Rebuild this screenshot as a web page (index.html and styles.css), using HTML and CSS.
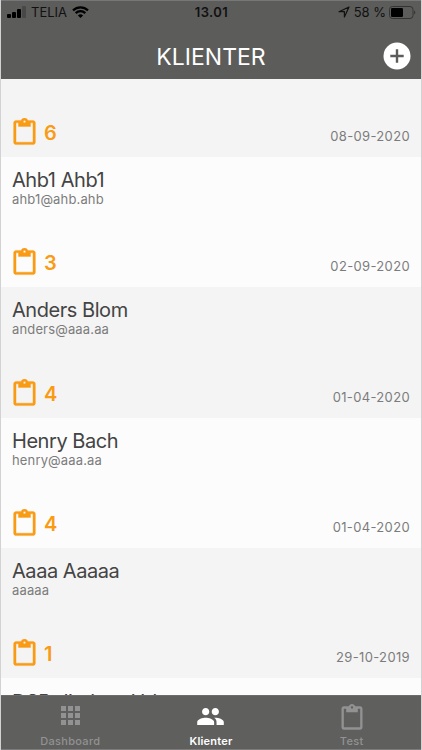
FILE: index.html
```html
<!DOCTYPE html>
<html lang="da">
<head>
    <meta charset="UTF-8">
    <meta name="viewport" content="width=device-width, initial-scale=1.0">
    <title>Klienter</title>
    <link rel="stylesheet" href="styles.css">
</head>
<body>
    <svg class="symbols">
        <symbol id="clipboard" viewBox="0 0 24 24">
            <path d="M19 2h-4.18C14.4.84 13.3 0 12 0c-1.3 0-2.4.84-2.82 2H5c-1.1 0-2 .9-2 2v16c0 1.1.9 2 2 2h14c1.1 0 2-.9 2-2V4c0-1.1-.9-2-2-2zm-7 0c.55 0 1 .45 1 1s-.45 1-1 1-1-.45-1-1 .45-1 1-1zm7 18H5V4h2v3h10V4h2v16z"/>
        </symbol>
    </svg>

    <div class="app">
        <header>
            <div class="status-bar">
                <div class="status-left">
                    <svg class="signal" viewBox="0 0 19 12">
                        <rect x="0" y="8" width="4" height="4" rx="1"/>
                        <rect x="5" y="6" width="4" height="6" rx="1"/>
                        <rect x="10" y="3" width="4" height="9" rx="1"/>
                        <rect class="dim" x="15" y="0" width="4" height="12" rx="1"/>
                    </svg>
                    <span class="carrier">TELIA</span>
                    <svg class="wifi" viewBox="0 0 17 12">
                        <path d="M1 4.4a10.8 10.8 0 0 1 15 0M3.7 7.1a7 7 0 0 1 9.6 0"/>
                        <path class="dot" d="M8.5 12L5.9 9.4a3.8 3.8 0 0 1 5.2 0z"/>
                    </svg>
                </div>
                <span class="clock">13.01</span>
                <div class="status-right">
                    <svg class="location" viewBox="0 0 12 12">
                        <path d="M1 5.7L11 1 6.4 11V5.7z"/>
                    </svg>
                    <span class="percent">58 %</span>
                    <svg class="battery" viewBox="0 0 27 13">
                        <rect class="shell" x=".5" y=".5" width="23.5" height="12" rx="3"/>
                        <rect x="2" y="2" width="12" height="9" rx="1.2"/>
                        <path class="tip" d="M25.2 4.5c1.6.6 1.6 3.4 0 4z"/>
                    </svg>
                </div>
            </div>
            <div class="title-bar">
                <h1>KLIENTER</h1>
                <button class="add-button" aria-label="Tilføj">
                    <svg viewBox="0 0 28 28">
                        <circle cx="14" cy="14" r="13.5"/>
                        <path d="M7.3 14h13.4M14 7.3v13.4"/>
                    </svg>
                </button>
            </div>
        </header>

        <main class="clients">
            <div class="client first">
                <div class="client-footer">
                    <svg class="clip"><use href="#clipboard"/></svg>
                    <span class="count">6</span>
                    <span class="date">08-09-2020</span>
                </div>
            </div>
            <div class="client">
                <h2>Ahb1 Ahb1</h2>
                <p>ahb1@ahb.ahb</p>
                <div class="client-footer">
                    <svg class="clip"><use href="#clipboard"/></svg>
                    <span class="count">3</span>
                    <span class="date">02-09-2020</span>
                </div>
            </div>
            <div class="client">
                <h2>Anders Blom</h2>
                <p>anders@aaa.aa</p>
                <div class="client-footer">
                    <svg class="clip"><use href="#clipboard"/></svg>
                    <span class="count">4</span>
                    <span class="date">01-04-2020</span>
                </div>
            </div>
            <div class="client">
                <h2>Henry Bach</h2>
                <p>henry@aaa.aa</p>
                <div class="client-footer">
                    <svg class="clip"><use href="#clipboard"/></svg>
                    <span class="count">4</span>
                    <span class="date">01-04-2020</span>
                </div>
            </div>
            <div class="client">
                <h2>Aaaa Aaaaa</h2>
                <p>aaaaa</p>
                <div class="client-footer">
                    <svg class="clip"><use href="#clipboard"/></svg>
                    <span class="count">1</span>
                    <span class="date">29-10-2019</span>
                </div>
            </div>
            <div class="client">
                <h2>DSB direktør Ud</h2>
            </div>
        </main>

        <nav class="tabs">
            <a class="tab">
                <svg class="grid-icon" viewBox="0 0 19 19">
                    <path d="M0 0h5v5H0zM7 0h5v5H7zM14 0h5v5h-5zM0 7h5v5H0zM7 7h5v5H7zM14 7h5v5h-5zM0 14h5v5H0zM7 14h5v5H7zM14 14h5v5h-5z"/>
                </svg>
                <span>Dashboard</span>
            </a>
            <a class="tab active">
                <svg class="people-icon" viewBox="0 0 24 24">
                    <path d="M16 11c1.66 0 2.99-1.34 2.99-3S17.66 5 16 5s-3 1.34-3 3 1.34 3 3 3zm-8 0c1.66 0 2.99-1.34 2.99-3S9.66 5 8 5 5 6.34 5 8s1.34 3 3 3zm0 2c-2.33 0-7 1.17-7 3.5V19h14v-2.5c0-2.33-4.67-3.5-7-3.5zm8 0c-.29 0-.62.02-.97.05 1.16.84 1.97 1.97 1.97 3.45V19h6v-2.5c0-2.33-4.67-3.5-7-3.5z"/>
                </svg>
                <span>Klienter</span>
            </a>
            <a class="tab">
                <svg class="clip"><use href="#clipboard"/></svg>
                <span>Test</span>
            </a>
        </nav>
    </div>
</body>
</html>
```
FILE: styles.css
```css
* { margin: 0; padding: 0; box-sizing: border-box; }
body {
    font-family: Inter, "Liberation Sans", sans-serif;
    background: #fcfcfc;
    color: #444;
}
.symbols {
    display: none;
}
.app {
    display: flex;
    flex-direction: column;
    height: 750px;
    border-left: 1px solid #d2d2d2;
    border-right: 1px solid #d2d2d2;
    overflow: hidden;
}
header {
    height: 79px;
    flex-shrink: 0;
    margin: 0 -1px;
    background: #5c5c5b;
    border-top: 1px solid #777;
}
.status-bar {
    display: grid;
    grid-template-columns: 1fr auto 1fr;
    align-items: center;
    height: 22px;
    padding: 0 6px 0 7px;
    color: #111;
    font-size: 13px;
}
.status-left, .status-right {
    display: flex;
    align-items: center;
}
.status-right {
    justify-content: flex-end;
}
.signal {
    width: 19px;
    height: 12px;
}
.signal .dim {
    fill: #484848;
}
.carrier {
    margin: 0 5px;
}
.wifi {
    width: 17px;
    height: 12px;
    fill: none;
    stroke: #000;
    stroke-width: 2.2;
}
.wifi .dot {
    fill: #000;
    stroke: none;
}
.clock {
    font-weight: 600;
    letter-spacing: 0.4px;
}
.location {
    width: 12px;
    height: 12px;
    margin-right: 4px;
    fill: none;
    stroke: #111;
    stroke-width: 1.2;
    stroke-linejoin: round;
}
.battery {
    width: 27px;
    height: 13px;
    margin-left: 3px;
}
.battery .shell {
    fill: none;
    stroke: #343434;
}
.battery .tip {
    fill: #343434;
}
.title-bar {
    display: grid;
    grid-template-columns: 1fr auto 1fr;
    align-items: center;
    height: 56px;
    padding: 0 11px;
    color: #fff;
}
h1 {
    grid-column: 2;
    padding-top: 12px;
    font-size: 23px;
    font-weight: 400;
    line-height: 28px;
}
.add-button {
    justify-self: end;
    width: 28px;
    height: 28px;
    margin-top: 10px;
    border: none;
    background: none;
}
.add-button svg {
    display: block;
    fill: #fff;
    stroke: #5c5c5b;
    stroke-width: 2.4;
}
.add-button circle {
    stroke: none;
}
.clients {
    flex: 1;
    min-height: 0;
    overflow: hidden;
}
.client {
    display: flex;
    flex-direction: column;
    height: 130.35px;
    padding: 11px 11px 10px;
    background: #fcfcfc;
}
.client:nth-child(odd) {
    background: #f4f4f4;
}
.client.first {
    height: 78px;
}
.client:last-child {
    padding-top: 12px;
}
h2 {
    font-size: 20px;
    font-weight: 400;
    line-height: 24px;
    letter-spacing: -0.45px;
    white-space: nowrap;
}
.client p {
    color: #7c7c7c;
    font-size: 13px;
    line-height: 15px;
    letter-spacing: 0.15px;
}
.client-footer {
    display: flex;
    align-items: flex-end;
    margin-top: auto;
}
.clip {
    width: 29px;
    height: 29px;
    fill: #f99b15;
    stroke: #f99b15;
    stroke-width: 0.3;
    overflow: visible;
}
.client-footer .clip {
    margin-left: -2px;
}
.count {
    margin-left: 5px;
    color: #f99b15;
    font-size: 20px;
    font-weight: 600;
    line-height: 28px;
}
.date {
    margin-left: auto;
    color: #7c7c7c;
    font-size: 13px;
    line-height: 22px;
    letter-spacing: 0.35px;
}
.tabs {
    display: grid;
    grid-template-columns: repeat(3, 1fr);
    height: 55px;
    flex-shrink: 0;
    margin: 0 -1px;
    background: #5f5f5e;
    border-top: 1px solid #6c6c6c;
    border-bottom: 1px solid #7c7c7c;
}
.tab {
    display: flex;
    flex-direction: column;
    align-items: center;
    justify-content: flex-end;
    padding-bottom: 1px;
    color: #929292;
    font-size: 11px;
    font-weight: 500;
    line-height: 14px;
    letter-spacing: 0.3px;
}
.tab svg {
    fill: #929292;
}
.tab.active {
    color: #fff;
    font-weight: 600;
    letter-spacing: 0.2px;
}
.tab.active svg {
    fill: #fff;
}
.grid-icon {
    width: 19px;
    height: 19px;
    margin-bottom: 9px;
}
.people-icon {
    width: 29px;
    height: 29px;
    margin-bottom: 3px;
}
.tab .clip {
    width: 28px;
    height: 28px;
    margin-bottom: 2px;
    stroke: none;
}
```
